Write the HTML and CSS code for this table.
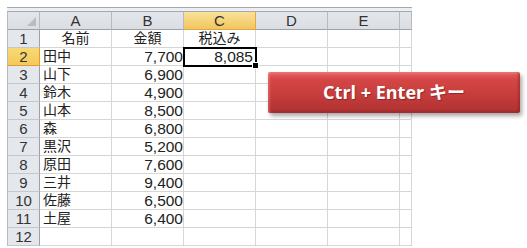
FILE: index.html
```html
<!DOCTYPE html>
<html lang="ja">
<head>
    <meta charset="UTF-8">
    <title>Ctrl + Enter</title>
    <link rel="stylesheet" href="styles.css">
</head>
<body>
    <div id="book">
        <div class="formula-edge"></div>
        <div class="sheet">
            <div class="corner"><span class="corner-mark"></span></div>
            <div class="col-head">A</div>
            <div class="col-head">B</div>
            <div class="col-head active">C</div>
            <div class="col-head">D</div>
            <div class="col-head">E</div>
            <div class="col-head"></div>

            <div class="row-head">1</div>
            <div class="cell center">名前</div>
            <div class="cell center">金額</div>
            <div class="cell center">税込み</div>
            <div class="cell"></div><div class="cell"></div><div class="cell"></div>

            <div class="row-head active">2</div>
            <div class="cell">田中</div>
            <div class="cell num">7,700</div>
            <div class="cell num selected">8,085<span class="fill-handle"></span></div>
            <div class="cell"></div><div class="cell"></div><div class="cell"></div>

            <div class="row-head">3</div>
            <div class="cell">山下</div>
            <div class="cell num">6,900</div>
            <div class="cell"></div><div class="cell"></div><div class="cell"></div><div class="cell"></div>

            <div class="row-head">4</div>
            <div class="cell">鈴木</div>
            <div class="cell num">4,900</div>
            <div class="cell"></div><div class="cell"></div><div class="cell"></div><div class="cell"></div>

            <div class="row-head">5</div>
            <div class="cell">山本</div>
            <div class="cell num">8,500</div>
            <div class="cell"></div><div class="cell"></div><div class="cell"></div><div class="cell"></div>

            <div class="row-head">6</div>
            <div class="cell">森</div>
            <div class="cell num">6,800</div>
            <div class="cell"></div><div class="cell"></div><div class="cell"></div><div class="cell"></div>

            <div class="row-head">7</div>
            <div class="cell">黒沢</div>
            <div class="cell num">5,200</div>
            <div class="cell"></div><div class="cell"></div><div class="cell"></div><div class="cell"></div>

            <div class="row-head">8</div>
            <div class="cell">原田</div>
            <div class="cell num">7,600</div>
            <div class="cell"></div><div class="cell"></div><div class="cell"></div><div class="cell"></div>

            <div class="row-head">9</div>
            <div class="cell">三井</div>
            <div class="cell num">9,400</div>
            <div class="cell"></div><div class="cell"></div><div class="cell"></div><div class="cell"></div>

            <div class="row-head">10</div>
            <div class="cell">佐藤</div>
            <div class="cell num">6,500</div>
            <div class="cell"></div><div class="cell"></div><div class="cell"></div><div class="cell"></div>

            <div class="row-head">11</div>
            <div class="cell">土屋</div>
            <div class="cell num">6,400</div>
            <div class="cell"></div><div class="cell"></div><div class="cell"></div><div class="cell"></div>

            <div class="row-head">12</div>
            <div class="cell"></div><div class="cell"></div><div class="cell"></div>
            <div class="cell"></div><div class="cell"></div><div class="cell"></div>
        </div>

        <!-- callout button over the grid -->
        <div class="key-button">Ctrl + Enter キー</div>
    </div>
</body>
</html>
```

FILE: styles.css
```css
html, body {
    margin: 0;
    padding: 0;
    background: #fff;
    overflow: hidden;
}
#book {
    position: relative;
    width: 527px;
    height: 248px;
    padding: 7px 0 0 7px;
    box-sizing: border-box;
    font-family: "Liberation Sans", "Noto Sans CJK JP", sans-serif;
    font-size: 14px;
    color: #222;
}
.formula-edge {
    width: 405px;
    height: 3px;
    border-top: 1px solid #a5a9ae;
    background: #eceef1;
}
.sheet {
    display: grid;
    grid-template-columns: 33px 72px 72px 72px 72px 72px 12px;
    grid-template-rows: 19px;
    grid-auto-rows: 18px;
    width: 405px;
}
.corner, .col-head {
    background: linear-gradient(#e3e6ea, #dadee3);
    border-top: 1px solid #a5a9ae;
    border-right: 1px solid #b7bbc1;
    border-bottom: 1px solid #9da1a7;
    box-sizing: border-box;
    text-align: center;
    line-height: 17px;
    color: #333;
    font-size: 15px;
}
.corner {
    position: relative;
    border-left: 1px solid #b7bbc1;
}
.corner-mark {
    position: absolute;
    right: 3px;
    bottom: 3px;
    width: 0;
    height: 0;
    border-left: 9px solid transparent;
    border-bottom: 9px solid #b9bdc3;
}
.col-head.active {
    background: linear-gradient(#f9e29a, #f2c55f);
    border-right-color: #e8a93c;
    border-bottom-color: #e0a73c;
}
.row-head {
    background: #e4e7eb;
    border-left: 1px solid #b7bbc1;
    border-right: 1px solid #9da1a7;
    border-bottom: 1px solid #c4c8cd;
    box-sizing: border-box;
    text-align: center;
    line-height: 17px;
    font-size: 15px;
    color: #333;
}
.row-head.active {
    background: linear-gradient(#f9d972, #f4c95b);
    border-right-color: #e29c2f;
    border-bottom-color: #e29c2f;
}
.cell {
    position: relative;
    border-right: 1px solid #d6d6d6;
    border-bottom: 1px solid #d6d6d6;
    box-sizing: border-box;
    padding: 0 3px;
    line-height: 17px;
    white-space: nowrap;
    font-size: 14px;
}
.cell.center {
    text-align: center;
}
.cell.num {
    text-align: right;
    font-size: 15.5px;
    padding-right: 0;
}
.cell.selected {
    outline: 2px solid #000;
    outline-offset: -1px;
    padding-right: 2px;
    z-index: 1;
}
.fill-handle {
    position: absolute;
    right: -4px;
    bottom: -4px;
    width: 5px;
    height: 5px;
    background: #000;
    border: 1px solid #fff;
}

/* red bevelled callout */
.key-button {
    position: absolute;
    left: 268px;
    top: 72px;
    width: 252px;
    height: 41px;
    box-sizing: border-box;
    border-radius: 2px;
    background: linear-gradient(#f08585 0, #e05555 3px, #d44646 8px, #c53c3c 24px, #b23232 38px, #952828 41px);
    box-shadow: 2px 3px 4px rgba(0, 0, 0, 0.35), inset 2px 0 2px rgba(255, 150, 150, 0.35), inset -2px 0 2px rgba(120, 20, 20, 0.35);
    color: #fff;
    font-family: "Open Sans", "Noto Sans CJK JP", sans-serif;
    font-weight: bold;
    font-size: 18px;
    line-height: 41px;
    text-align: center;
    text-shadow: 1px 1px 1px rgba(80, 0, 0, 0.4);
}
```
